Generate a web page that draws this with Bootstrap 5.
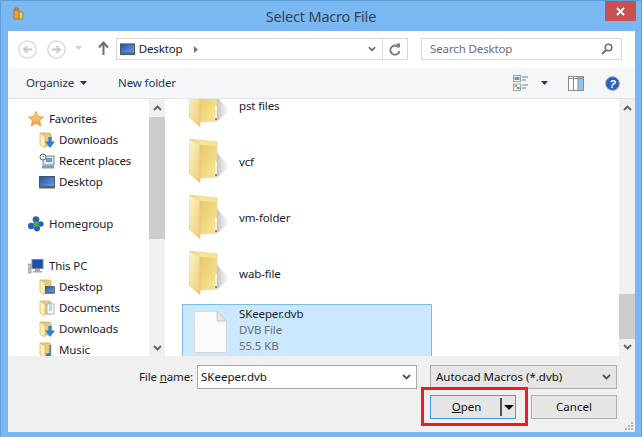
<!DOCTYPE html>
<html lang="en"><head><meta charset="utf-8"><title>Select Macro File</title>
<link href="https://cdn.jsdelivr.net/npm/bootstrap@5.3.0/dist/css/bootstrap.min.css" rel="stylesheet">
<style>
html,body{margin:0;width:642px;height:437px;overflow:hidden;background:#79b8f2}
body{font-family:"Noto Sans","Open Sans",sans-serif;font-size:11.5px;letter-spacing:-.13px;line-height:16px;color:#1a1a2e}
.dlg{width:642px;height:437px;background:#79b8f2;border:1px solid #5f9fd8;border-bottom:0;display:flex;flex-direction:column}
.ttl{height:30px;flex:none;display:grid;grid-template-columns:1fr auto 1fr;align-items:start}
.ttl-t{font-size:14.5px;letter-spacing:-.2px;line-height:20px;margin-top:5px;color:#39414f}
.ttl-i{margin:6px 0 0 12px}
.x-btn{justify-self:end;width:31px;height:20px;margin-right:5px;background:#c75050;display:flex;align-items:center;justify-content:center}
.client{margin:0 6px 5px 7px;flex:1;min-height:0;background:#f0f0f0;display:flex;flex-direction:column}
.navr{height:37px;flex:none;background:#fff;padding:7px 13px 0 10px;display:flex;align-items:flex-start}
.circ{width:19px;height:19px;margin-top:2px;margin-right:10px}
.drop{margin:8px 12px 0 -1px}
.up{margin:3px 7px 0 4px}
.addr{width:294px;height:22px;border:1px solid #d9d9d9;display:flex;align-items:center;background:#fff}
.addr .lbl{margin-left:4px}
.addr .tail{margin-left:auto;display:flex;align-items:center;height:100%}
.addr .ref{width:25px;height:100%;border-left:1px solid #d9d9d9;display:flex;align-items:center;justify-content:center}
.srch{width:202px;height:22px;margin-left:13px;border:1px solid #d9d9d9;display:flex;align-items:center;padding:0 8px;color:#6d6d6d;justify-content:space-between}
.cmd{height:31px;flex:none;background:#f5f6f7;border-bottom:1px solid #e5e5e5;display:flex;align-items:center;padding:0 15px 0 18px;color:#1e395b}
.cmd .nf{margin-left:31px}
.cmd .rt{margin-left:auto;display:flex;align-items:center}
.mainr{height:257px;flex:none;background:#fff;display:flex;overflow:hidden}
.side{width:157px;flex:none;display:flex;overflow:hidden}
.tree{width:141px;flex:none;margin:0;padding:9px 0 0;list-style:none;white-space:nowrap}
.tree li{height:21px;display:flex;align-items:center;gap:5px;padding-left:20px}
.tree li.sub{padding-left:31px;gap:4px}
.sb{width:16px;flex:none;background:#f0f0f0;display:flex;flex-direction:column;align-items:center;height:257px}
.sb svg{flex:none}
.sb .th{width:100%;background:#cdcdcd}
.files{flex:1;padding-left:17px;margin-top:-21px;min-width:0}
.frow{width:250px;height:56px;display:flex;align-items:center;padding-left:6px;border:1px solid transparent}
.frow .ic{width:50px;flex:none}
.fsel{height:60px;margin-top:2px;background:#cce8ff;border-color:#7db8ea;align-items:flex-start;padding-top:0}
.fsel .ic{padding:6px 0 0 5px}
.fsel .tx{padding-top:1px}
.fsel .tx div{height:16px;line-height:16px}
.fsel .sec{color:#6d6d6d}
.bot{flex:1;background:#f0f0f0;padding:9px 18px 0 0;position:relative}
.fr1{display:flex;justify-content:flex-end;align-items:center;height:24px}
.fr1 .lab{margin-right:4px}
.cb.form-select{font-size:11.5px;line-height:16px;height:24px;padding:3px 20px 3px 3px;border:1px solid #ababab;border-radius:0;color:#111;box-shadow:none;font-family:inherit;
background-image:url("data:image/svg+xml,%3Csvg xmlns='http://www.w3.org/2000/svg' viewBox='0 0 9 6'%3E%3Cpath d='M1 1l3.500 3.500L8 1' fill='none' stroke='%23555' stroke-width='1.8'/%3E%3C/svg%3E");background-position:right 5px center;background-size:9px 6px}
.cb-a{width:220px;background-color:#fff}
.cb-b{width:187px;margin-left:13px;background-color:#e5e5e5;border-color:#adadad!important;padding-left:5px!important}
.fr2{display:flex;justify-content:flex-end;align-items:flex-start;margin-top:-2px}
.redb{border:3px solid #ed1c24;padding:5px 8px 4px 6px;width:107px;height:39px;margin-right:3px}
.wbtn.btn{width:86px;height:24px;padding:0;border-radius:0;font-size:11.5px;line-height:22px;color:#111;background:#e6e6e6;border:1px solid #adadad;display:flex;align-items:center;justify-content:center;font-family:inherit}
.wbtn.opn{border-color:#3c9be8}
.opn .ot{flex:1;text-align:center;padding-left:2px}
.opn .sp{width:2px;height:18px;background:#555;margin-right:2px}
.opn svg{margin-right:1px}
.grip{position:absolute;right:1px;bottom:1px}
</style></head><body>
<svg width="0" height="0" style="position:absolute"><defs>
<linearGradient id="fa" x1="0" x2="1" y1="0" y2="1"><stop offset="0" stop-color="#fff6cc"/><stop offset="1" stop-color="#eccb70"/></linearGradient>
<linearGradient id="fb" x1="0" x2="1" y1="0" y2="1"><stop offset="0" stop-color="#e8c56c"/><stop offset="1" stop-color="#fbe794"/></linearGradient>
<linearGradient id="fs" x1="0" x2="1" y1="0" y2="0"><stop offset="0" stop-color="#999" stop-opacity=".6"/><stop offset="1" stop-color="#bbb" stop-opacity="0"/></linearGradient>
<linearGradient id="dk" x1="0" x2="1" y1="0" y2="1"><stop offset="0" stop-color="#1f4fa8"/><stop offset="1" stop-color="#6fa2e4"/></linearGradient>
<linearGradient id="st" x1="0" x2="0" y1="0" y2="1"><stop offset="0" stop-color="#ffe08a"/><stop offset="1" stop-color="#f79a3c"/></linearGradient>
<symbol id="bigf" viewBox="0 0 42 46">
<path d="M28 14L41 28L28 38z" fill="url(#fs)"/>
<path d="M0 0L28 3V38L10 39z" fill="#f8e39a" stroke="#e3c77c" stroke-width=".6"/>
<path d="M11 6L27 7V37L11 38z" fill="url(#fb)"/>
<path d="M0 0L11 5V44L0 34z" fill="url(#fa)" stroke="#e3c77c" stroke-width=".6"/>
<path d="M27 23v12" stroke="#fff" stroke-width="1.2"/><path d="M26 35h2v2h-2z" fill="#5b97d4"/>
</symbol>
<symbol id="smf" viewBox="0 0 16 16">
<path d="M1 1h9l2 1v12H6z" fill="#eccb74" stroke="#bfa050" stroke-width=".6"/>
<path d="M1 1l5 3v12l-5-3z" fill="#fdf0b4" stroke="#c8ad60" stroke-width=".6"/>
</symbol>
<symbol id="mon" viewBox="0 0 16 13">
<rect x=".5" y=".5" width="15" height="10" fill="url(#dk)" stroke="#44546c"/><rect x="0" y="10" width="16" height="2.500" fill="#566070"/>
</symbol>
<symbol id="arr" viewBox="0 0 9 10"><path d="M3 0h3v4h3L4.500 10 0 4h3z" fill="#2c80d3"/></symbol>
<symbol id="chu" viewBox="0 0 9 6"><path d="M1 5l3.500-3.500L8 5" fill="none" stroke="#606060" stroke-width="1.8"/></symbol>
<symbol id="chd" viewBox="0 0 9 6"><path d="M1 1l3.500 3.500L8 1" fill="none" stroke="#606060" stroke-width="1.8"/></symbol>
</defs></svg>
<div class="dlg">
 <div class="ttl">
  <svg class="ttl-i" width="11" height="13" viewBox="0 0 11 13"><path d="M1 3h5v9H1z" fill="#f0a030" stroke="#c0651a" stroke-width=".8"/><path d="M2 1h3v2H2z" fill="none" stroke="#a86a30"/><path d="M6 5h4v7H6z" fill="#cfcf70" stroke="#7c8a40" stroke-width=".8"/></svg>
  <div class="ttl-t">Select Macro File</div>
  <div class="x-btn"><svg width="9" height="9" viewBox="0 0 9 9"><path d="M1 1l7 7M8 1l-7 7" stroke="#fff" stroke-width="1.9"/></svg></div>
 </div>
 <div class="client">
  <div class="navr">
   <svg class="circ" viewBox="0 0 19 19"><circle cx="9.500" cy="9.500" r="8.700" fill="#fff" stroke="#d4d4d4" stroke-width="1.2"/><path d="M14 9.500H6M9.500 6L6 9.500 9.500 13" fill="none" stroke="#c8c8c8" stroke-width="1.8"/></svg>
   <svg class="circ" viewBox="0 0 19 19"><circle cx="9.500" cy="9.500" r="8.700" fill="#fff" stroke="#d4d4d4" stroke-width="1.2"/><path d="M5 9.500h8M9.500 6l3.500 3.500L9.500 13" fill="none" stroke="#c8c8c8" stroke-width="1.8"/></svg>
   <svg class="drop" width="7" height="4" viewBox="0 0 7 4"><path d="M0 0h7L3.500 4z" fill="#d0d0d0"/></svg>
   <svg class="up" width="11" height="14" viewBox="0 0 11 14"><path d="M5.500 14V2M1 6.500l4.500-5 4.500 5" fill="none" stroke="#6e6e6e" stroke-width="2"/></svg>
   <div class="addr">
    <svg style="margin-left:3px" width="15" height="13"><use href="#mon"/></svg>
    <span class="lbl">Desktop</span>
    <svg style="margin-left:12px" width="4" height="7" viewBox="0 0 4 7"><path d="M0 0l4 3.500L0 7z" fill="#777"/></svg>
    <div class="tail"><svg style="margin-right:6px" width="8" height="6"><use href="#chd"/></svg>
     <div class="ref"><svg width="12" height="13" viewBox="0 0 12 13"><path d="M9.800 4.500A4.600 4.600 0 1 0 10.500 8" fill="none" stroke="#777" stroke-width="1.800"/><path d="M7 .500h4v4.200z" fill="#777"/></svg></div></div>
   </div>
   <div class="srch"><span>Search Desktop</span><svg width="12" height="12" viewBox="0 0 12 12"><circle cx="7.500" cy="4.500" r="3.300" fill="none" stroke="#6e6e6e" stroke-width="1.600"/><path d="M5 7l-4 4" stroke="#6e6e6e" stroke-width="2"/></svg></div>
  </div>
  <div class="cmd">
   <span>Organize</span><svg style="margin-left:6px" width="7" height="4" viewBox="0 0 7 4"><path d="M0 0h7L3.500 4z" fill="#1e395b"/></svg>
   <span class="nf">New folder</span>
   <div class="rt">
    <svg width="16" height="16" viewBox="0 0 16 16"><rect x=".5" y=".5" width="7" height="6" fill="#fff" stroke="#8aa"/><rect x="1.500" y="2" width="5" height="3" fill="#5a9bd5"/><rect x=".5" y="9" width="7" height="6.500" fill="#fff" stroke="#8aa"/><rect x="1.500" y="10" width="2.500" height="2" fill="#d83"/><rect x="4" y="12" width="2.500" height="2" fill="#4a4"/><path d="M9 2h6M9 5h4M9 10h6M9 13h4" stroke="#6c7a8c"/></svg>
    <svg style="margin-left:12px" width="7" height="4" viewBox="0 0 7 4"><path d="M0 0h7L3.500 4z" fill="#1e395b"/></svg>
    <svg style="margin-left:20px" width="16" height="15" viewBox="0 0 16 15"><rect x=".5" y=".5" width="15" height="14" fill="#fff" stroke="#8a8a8a"/><rect x="10" y="1" width="5" height="13" fill="#8cc4f5"/><path d="M5.500 1v13M10 1v13M1 2.500h14" stroke="#8a8a8a"/></svg>
    <svg style="margin-left:21px" width="15" height="15" viewBox="0 0 15 15"><circle cx="7.500" cy="7.500" r="6.800" fill="#2a62c4" stroke="#8a94a8"/><text x="7.500" y="11.500" text-anchor="middle" font-size="11" font-weight="700" font-style="italic" fill="#fff" font-family="Liberation Sans">?</text></svg>
   </div>
  </div>
  <div class="mainr">
   <div class="side">
    <ul class="tree">
     <li><svg width="16" height="16" viewBox="0 0 16 16"><path d="M8 .5l2.300 5 5.200.6-3.900 3.500 1.100 5.400L8 12.300 3.300 15l1.100-5.400L.5 6.100l5.200-.6z" fill="url(#st)" stroke="#ee8f3a" stroke-width=".8"/></svg><span>Favorites</span></li>
     <li class="sub"><svg width="16" height="16"><use href="#smf"/><use href="#arr" x="6" y="5" width="10" height="11"/></svg><span>Downloads</span></li>
     <li class="sub"><svg width="16" height="16" viewBox="0 0 16 16"><rect x="4" y="3" width="11" height="9" fill="#dbe6ee" stroke="#7c8a96"/><rect x="7" y="5" width="6" height="4" fill="#5fa0d8"/><circle cx="4" cy="4" r="3" fill="#fff" stroke="#666"/><path d="M4 2.500V4h1.500" fill="none" stroke="#666" stroke-width=".7"/><path d="M3 12.500h12V15.500H3z" fill="#8f98a0"/></svg><span>Recent places</span></li>
     <li class="sub"><svg width="16" height="16"><use href="#mon" y="2" width="16" height="13"/></svg><span>Desktop</span></li>
     <li></li>
     <li><svg width="16" height="16" viewBox="0 0 16 16"><circle cx="8" cy="3.500" r="3.300" fill="#2a62b8"/><circle cx="3.200" cy="10" r="3.200" fill="#2a62b8"/><circle cx="12.800" cy="8" r="2.800" fill="#2a62b8"/><circle cx="9" cy="12.500" r="3" fill="#2a62b8"/><circle cx="8" cy="8" r="2.800" fill="#4aa84a"/></svg><span>Homegroup</span></li>
     <li></li>
     <li><svg width="16" height="16" viewBox="0 0 16 16"><rect x="0" y="6" width="3" height="9" fill="#c5c9cc" stroke="#777" stroke-width=".6"/><rect x="4" y="1.500" width="11" height="9" fill="#1d4fb0" stroke="#7a8590"/><path d="M7 11h5v2H7zM5 13h9v1.500H5z" fill="#a0a8ae"/></svg><span>This PC</span></li>
     <li class="sub"><svg width="16" height="16"><use href="#smf"/><use href="#mon" x="6" y="7" width="10" height="8"/></svg><span>Desktop</span></li>
     <li class="sub"><svg width="16" height="16"><use href="#smf"/><rect x="8" y="4" width="7" height="10" fill="#fff" stroke="#8aa4b8" stroke-width=".8"/><path d="M10 6h3M10 8h3M10 10h3" stroke="#7aa"/></svg><span>Documents</span></li>
     <li class="sub"><svg width="16" height="16"><use href="#smf"/><use href="#arr" x="6" y="5" width="10" height="11"/></svg><span>Downloads</span></li>
     <li class="sub"><svg width="16" height="16"><use href="#smf"/><path d="M11 3v9" stroke="#2c80d3" stroke-width="1.500"/><ellipse cx="9.500" cy="13" rx="2.500" ry="2" fill="#2c80d3"/></svg><span>Music</span></li>
    </ul>
    <div class="sb"><svg style="margin-top:6px;margin-bottom:6px" width="9" height="6"><use href="#chu"/></svg><div class="th" style="height:122px"></div><svg style="margin-top:106px" width="9" height="6"><use href="#chd"/></svg></div>
   </div>
   <div class="files">
    <div class="frow"><div class="ic"><svg class="d-block" width="42" height="46"><use href="#bigf"/></svg></div><span>pst files</span></div>
    <div class="frow"><div class="ic"><svg class="d-block" width="42" height="46"><use href="#bigf"/></svg></div><span>vcf</span></div>
    <div class="frow"><div class="ic"><svg class="d-block" width="42" height="46"><use href="#bigf"/></svg></div><span>vm-folder</span></div>
    <div class="frow"><div class="ic"><svg class="d-block" width="42" height="46"><use href="#bigf"/></svg></div><span>wab-file</span></div>
    <div class="frow fsel"><div class="ic"><svg class="d-block" width="33" height="42" viewBox="0 0 33 42"><path d="M.5.500H23L32.500 10V41.500H.5z" fill="#fbfbfb" stroke="#d9d9d9"/><path d="M23 .500V10H32.500z" fill="#e6e6e6" stroke="#c8c8c8"/></svg></div><div class="tx"><div>SKeeper.dvb</div><div class="sec">DVB File</div><div class="sec">55.5 KB</div></div></div>
   </div>
   <div class="sb"><svg style="margin-top:6px" width="9" height="6"><use href="#chu"/></svg><div class="th" style="height:45px;margin-top:183px"></div><svg style="margin-top:5px" width="9" height="6"><use href="#chd"/></svg></div>
  </div>
  <div class="bot">
   <div class="fr1"><span class="lab">File <u>n</u>ame:</span><select class="form-select cb cb-a"><option>SKeeper.dvb</option></select><select class="form-select cb cb-b"><option>Autocad Macros (*.dvb)</option></select></div>
   <div class="fr2">
    <div class="redb"><button class="btn wbtn opn"><span class="ot"><u>O</u>pen</span><span class="sp"></span><svg width="10" height="5" viewBox="0 0 10 5"><path d="M0 0h10L5 5z" fill="#111"/></svg></button></div>
    <button class="btn wbtn" style="margin-top:8px">Cancel</button>
   </div>
   <svg class="grip" width="10" height="10" viewBox="0 0 10 10"><path d="M7 1h2v2H7zM4 4h2v2H4zM7 4h2v2H7zM1 7h2v2H1zM4 7h2v2H4zM7 7h2v2H7z" fill="#b8b8b8"/></svg>
  </div>
 </div>
</div>
</body></html>
